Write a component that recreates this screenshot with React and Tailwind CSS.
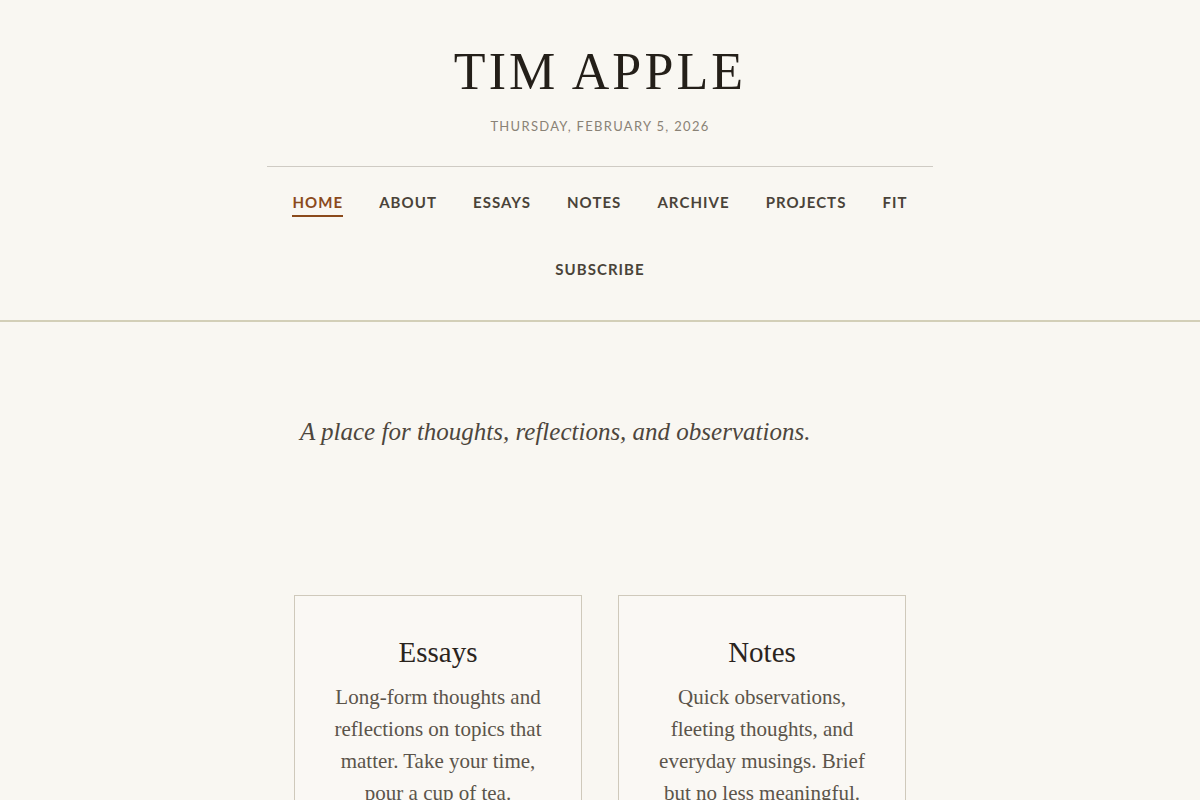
const navItems = ["Home", "About", "Essays", "Notes", "Archive", "Projects", "Fit", "Subscribe"];

const sections = [
  {
    title: "Essays",
    body: "Long-form thoughts and reflections on topics that matter. Take your time, pour a cup of tea.",
  },
  {
    title: "Notes",
    body: "Quick observations, fleeting thoughts, and everyday musings. Brief but no less meaningful.",
  },
];

const display = { fontFamily: '"Liberation Serif", "DejaVu Serif", serif' };
const sans = { fontFamily: 'Lato, "Open Sans", "Liberation Sans", sans-serif' };
const text = { fontFamily: '"Liberation Serif", "DejaVu Serif", serif' };

export default function App() {
  return (
    <div className="min-h-screen bg-[#f9f7f2] text-[#2a241d]">
      <header className="border-b-2 border-[#d3cfb8] pt-[40px]">
        <div className="mx-auto flex w-[666px] flex-col items-center">
          <h1 style={display} className="text-[52px] leading-[64px] tracking-[0.06em] text-[#241f19]">
            TIM APPLE
          </h1>
          <p style={sans} className="mt-[12px] text-[13px] leading-[20px] tracking-[0.1em] text-[#8a8276]">
            THURSDAY, FEBRUARY 5, 2026
          </p>
          <nav className="mt-[30px] w-full border-t border-[#cfcbc4] pt-[12px] pb-[28px]">
            <ul className="flex flex-wrap justify-center gap-x-[36px] gap-y-[21px]">
              {navItems.map((item, i) => (
                <li key={item} className="py-[12px]">
                  <a
                    href="#"
                    style={sans}
                    className={
                      i === 0
                        ? "relative block text-[15px] font-bold leading-[22px] tracking-[0.07em] text-[#8b4a1c]"
                        : "block text-[15px] font-bold leading-[22px] tracking-[0.07em] text-[#4a4339]"
                    }
                  >
                    {item.toUpperCase()}
                    {i === 0 && <span className="absolute -bottom-[4px] left-0 right-0 h-[2px] bg-[#8b4a1c]" />}
                  </a>
                </li>
              ))}
            </ul>
          </nav>
        </div>
      </header>

      <main className="pt-[94px] pb-20">
        <p style={text} className="mx-auto w-[600px] text-[25px] italic leading-[32px] text-[#4d463d]">
          A place for thoughts, reflections, and observations.
        </p>

        <div className="mx-auto mt-[147px] grid w-[612px] grid-cols-2 gap-[36px]">
          {sections.map((s) => (
            <div key={s.title} className="border border-[#cfc9bb] bg-[#faf8f4] px-[36px] pt-[36px] pb-[40px] text-center">
              <h2 style={display} className="text-[29px] leading-[40px] text-[#2a241d]">
                {s.title}
              </h2>
              <p style={text} className="mt-[9px] text-[21px] leading-[32px] text-[#5b544a]">
                {s.body}
              </p>
            </div>
          ))}
        </div>
      </main>
    </div>
  );
}
